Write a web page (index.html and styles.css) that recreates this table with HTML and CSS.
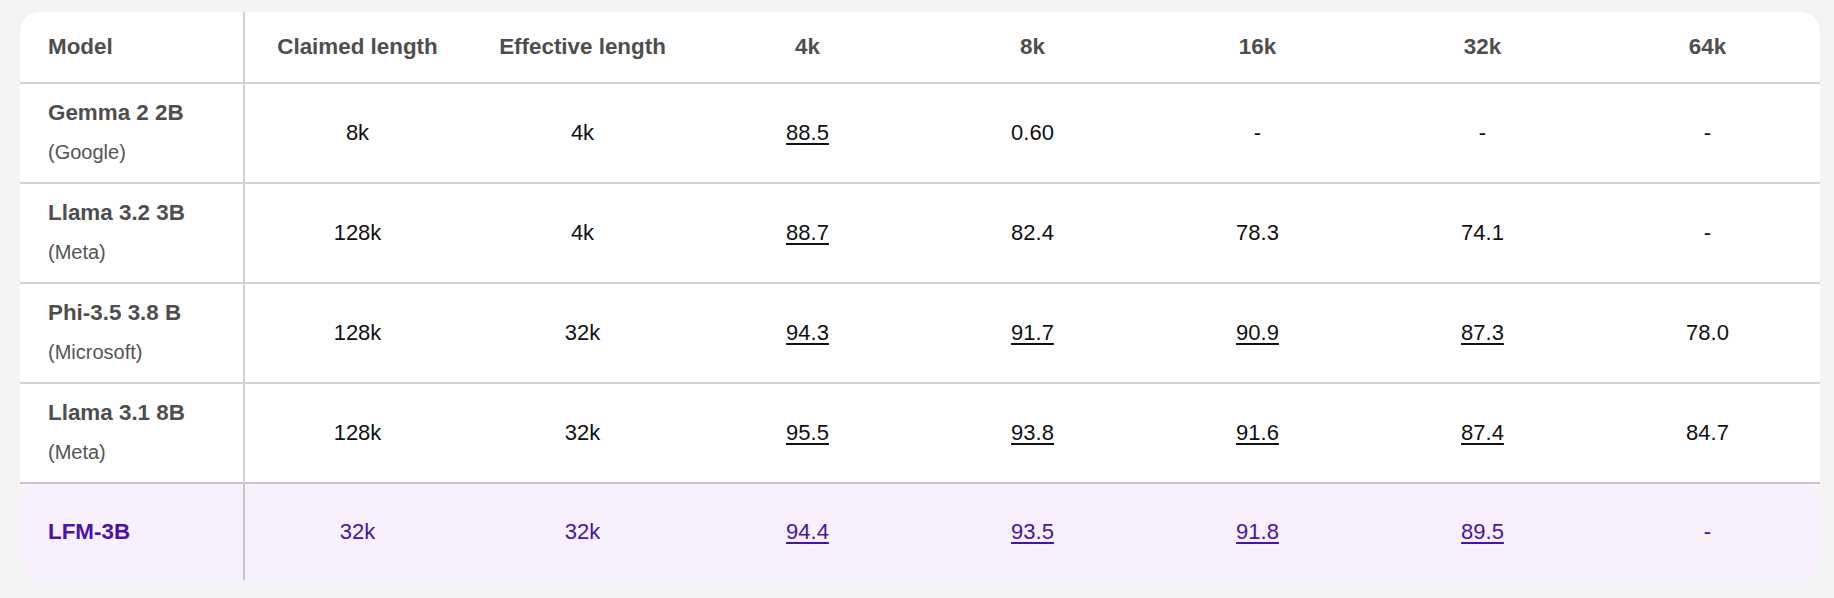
FILE: index.html
```html
<!DOCTYPE html>
<html>
<head>
<meta charset="utf-8">
<link rel="stylesheet" href="styles.css">
</head>
<body>
<div class="card">
<table class="bench">
<colgroup>
<col class="c"><col class="c"><col class="c"><col class="c"><col class="c"><col class="c"><col class="c"><col class="c">
</colgroup>
<thead>
<tr>
<th class="model">Model</th><th>Claimed length</th><th>Effective length</th><th>4k</th><th>8k</th><th>16k</th><th>32k</th><th>64k</th>
</tr>
</thead>
<tbody>
<tr>
<td class="model"><div class="name">Gemma 2 2B</div><div class="org">(Google)</div></td>
<td>8k</td><td>4k</td><td><a href="#">88.5</a></td><td>0.60</td><td>-</td><td>-</td><td>-</td>
</tr>
<tr>
<td class="model"><div class="name">Llama 3.2 3B</div><div class="org">(Meta)</div></td>
<td>128k</td><td>4k</td><td><a href="#">88.7</a></td><td>82.4</td><td>78.3</td><td>74.1</td><td>-</td>
</tr>
<tr>
<td class="model"><div class="name">Phi-3.5 3.8 B</div><div class="org">(Microsoft)</div></td>
<td>128k</td><td>32k</td><td><a href="#">94.3</a></td><td><a href="#">91.7</a></td><td><a href="#">90.9</a></td><td><a href="#">87.3</a></td><td>78.0</td>
</tr>
<tr>
<td class="model"><div class="name">Llama 3.1 8B</div><div class="org">(Meta)</div></td>
<td>128k</td><td>32k</td><td><a href="#">95.5</a></td><td><a href="#">93.8</a></td><td><a href="#">91.6</a></td><td><a href="#">87.4</a></td><td>84.7</td>
</tr>
<tr class="ours">
<td class="model"><div class="name">LFM-3B</div></td>
<td>32k</td><td>32k</td><td><a href="#">94.4</a></td><td><a href="#">93.5</a></td><td><a href="#">91.8</a></td><td><a href="#">89.5</a></td><td>-</td>
</tr>
</tbody>
</table>
</div>
</body>
</html>
```
FILE: styles.css
```css
html, body {
  margin: 0;
  padding: 0;
  background: #f3f3f3;
}
body {
  padding: 12px 14px 0 20px;
  font-family: "Liberation Sans", Arial, sans-serif;
}
.card {
  width: 1800px;
  background: #ffffff;
  border-radius: 20px;
  overflow: hidden;
}
.bench {
  width: 1800px;
  table-layout: fixed;
  border-collapse: separate;
  border-spacing: 0;
}
.c { width: 225px; }
.bench th {
  height: 70px;
  padding: 0;
  font-size: 22.4px;
  font-weight: 700;
  color: #4e4e4e;
  text-align: center;
  border-bottom: 2px solid #d2d2d2;
}
.bench td {
  height: 98px;
  padding: 0;
  font-size: 22px;
  color: #111111;
  text-align: center;
  border-bottom: 2px solid #d2d2d2;
}
.bench th.model, .bench td.model {
  text-align: left;
  padding-left: 28px;
  border-right: 2px solid #d2d2d2;
}
.bench td.model {
  vertical-align: top;
  padding-top: 15px;
  height: 83px;
}
.name {
  font-size: 22.4px;
  font-weight: 700;
  line-height: 28px;
  color: #4e4e4e;
}
.org {
  margin-top: 13px;
  font-size: 20px;
  line-height: 24px;
  color: #555555;
}
.bench a {
  color: inherit;
  text-decoration: underline;
  text-underline-offset: 3px;
  text-decoration-thickness: 2px;
}
.bench tr:nth-last-child(2) td {
  border-bottom-color: #c9c5cd;
}
.ours td {
  height: 96px;
  background: #f8f0fd;
  color: #4a12a6;
  border-bottom: none;
}
.bench .ours td.model {
  vertical-align: middle;
  padding-top: 0;
  height: 96px;
  border-right-color: #c9c5cd;
}
.ours .name {
  color: #4a12a6;
}
```
